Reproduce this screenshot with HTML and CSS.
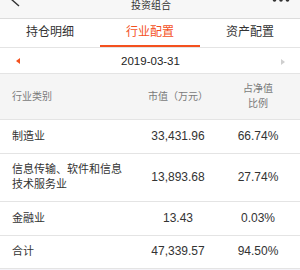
FILE: index.html
```html
<!DOCTYPE html>
<html lang="zh-CN">
<head>
    <meta charset="UTF-8">
    <meta name="viewport" content="width=device-width, initial-scale=1.0">
    <title>投资组合</title>
    <link rel="stylesheet" href="styles.css">
</head>
<body>
    <div class="navbar">
        <svg class="nav-back" width="30" height="18" viewBox="0 0 30 18">
            <polyline points="19,-12 11,-1 19,6" fill="none" stroke="#333" stroke-width="1.4"/>
        </svg>
        <div class="nav-title">投资组合</div>
        <svg class="nav-more" width="30" height="18" viewBox="0 0 30 18">
            <circle cx="4.5" cy="0" r="1.8" fill="#333"/>
            <circle cx="11" cy="0" r="1.8" fill="#333"/>
            <circle cx="17.5" cy="0" r="1.8" fill="#333"/>
        </svg>
    </div>

    <div class="tabs">
        <div class="tab">持仓明细</div>
        <div class="tab active">行业配置</div>
        <div class="tab">资产配置</div>
    </div>

    <div class="date-bar">
        <span class="arrow prev"></span>
        <span class="date">2019-03-31</span>
        <span class="arrow next"></span>
    </div>

    <div class="table">
        <div class="row head">
            <div class="cell name">行业类别</div>
            <div class="cell">市值（万元）</div>
            <div class="cell">占净值<br>比例</div>
        </div>
        <div class="row">
            <div class="cell name">制造业</div>
            <div class="cell num">33,431.96</div>
            <div class="cell num">66.74%</div>
        </div>
        <div class="row">
            <div class="cell name">信息传输、软件和信息技术服务业</div>
            <div class="cell num">13,893.68</div>
            <div class="cell num">27.74%</div>
        </div>
        <div class="row">
            <div class="cell name">金融业</div>
            <div class="cell num">13.43</div>
            <div class="cell num">0.03%</div>
        </div>
        <div class="row">
            <div class="cell name">合计</div>
            <div class="cell num">47,339.57</div>
            <div class="cell num">94.50%</div>
        </div>
    </div>
</body>
</html>
```

FILE: styles.css
```css
:root {
    --orange: #f4511e;
    --text-color: #333;
    --muted: #7a7a7a;
    --line: #e4e4e4;
}
body {
    margin: 0;
    font-family: "Liberation Sans", "Noto Sans CJK SC", sans-serif;
    color: var(--text-color);
    background-color: #f3f3f8;
}
.navbar {
    display: flex;
    justify-content: space-between;
    align-items: flex-start;
    height: 18px;
    background-color: #f7f7f7;
    border-bottom: 1px solid #dcdcdc;
}
.nav-title {
    font-size: 10px;
    line-height: 12px;
    margin-left: 2px;
}
.tabs {
    display: flex;
    background-color: white;
    border-bottom: 1px solid var(--line);
}
.tab {
    flex: 1;
    text-align: center;
    font-size: 12px;
    line-height: 26px;
    border-bottom: 2px solid transparent;
}
.tab.active {
    color: var(--orange);
    border-bottom-color: var(--orange);
}
.date-bar {
    display: flex;
    justify-content: space-between;
    align-items: center;
    height: 25px;
    padding: 0 15px 0 16px;
    background-color: white;
}
.date {
    font-size: 11.5px;
    color: #222;
}
.arrow {
    width: 0;
    height: 0;
    border-top: 3.5px solid transparent;
    border-bottom: 3.5px solid transparent;
}
.arrow.prev {
    border-right: 4px solid var(--orange);
}
.arrow.next {
    border-left: 4px solid #cfcfcf;
    margin-top: 3px;
}
.table {
    background-color: white;
}
.row {
    display: grid;
    grid-template-columns: 140px 76px 1fr;
    align-items: center;
    border-bottom: 1px solid var(--line);
    font-size: 11px;
    line-height: 15px;
    padding: 8.75px 0;
}
.row.head {
    background-color: #f5f5f5;
    border-top: 1px solid var(--line);
    color: var(--muted);
    font-size: 10px;
    padding: 7px 0 8px;
}
.cell {
    text-align: center;
}
.cell.name {
    text-align: left;
    padding: 0 14px 0 12px;
}
.cell.num {
    font-size: 12px;
}
```
